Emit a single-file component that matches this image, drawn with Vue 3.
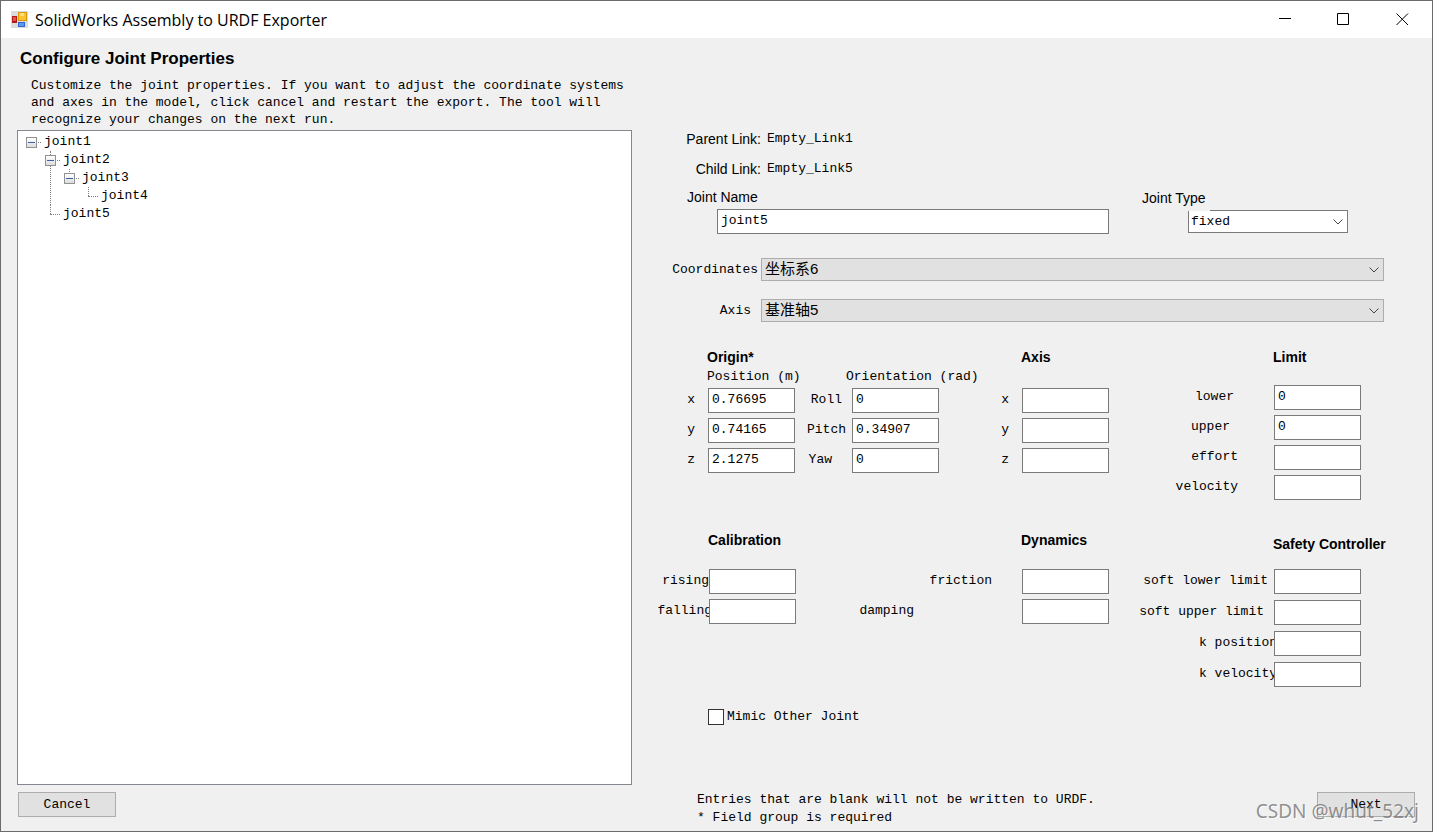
<script setup>
import { reactive, ref } from 'vue'

const open = reactive({ joint1: true, joint2: true, joint3: true })
const jointName = ref('joint5')
const mimic = ref(false)

const position = reactive([
  { id: 'pos-x', label: 'x', value: '0.76695' },
  { id: 'pos-y', label: 'y', value: '0.74165' },
  { id: 'pos-z', label: 'z', value: '2.1275' },
])
const orientation = reactive([
  { id: 'roll', label: 'Roll', value: '0', gap: 'gap-m' },
  { id: 'pitch', label: 'Pitch', value: '0.34907', gap: 'gap-s' },
  { id: 'yaw', label: 'Yaw', value: '0', gap: 'gap-yaw' },
])
const axis = reactive([
  { id: 'axis-x', label: 'x', value: '' },
  { id: 'axis-y', label: 'y', value: '' },
  { id: 'axis-z', label: 'z', value: '' },
])
const limit = reactive([
  { id: 'lower', label: 'lower', value: '0', gap: 'gap-xl' },
  { id: 'upper', label: 'upper', value: '0', gap: 'gap-xxl' },
  { id: 'effort', label: 'effort', value: '', gap: 'gap-l' },
  { id: 'velocity', label: 'velocity', value: '', gap: 'gap-l' },
])
const calibration = reactive([
  { id: 'rising', label: 'rising', value: '', gap: '' },
  { id: 'falling', label: 'falling', value: '', gap: 'tuck' },
])
const dynamics = reactive([
  { id: 'friction', label: 'friction', value: '', gap: 'gap-friction' },
  { id: 'damping', label: 'damping', value: '', gap: 'gap-damping' },
])
const safety = reactive([
  { id: 'soft-lower', label: 'soft lower limit', value: '', gap: 'gap-s' },
  { id: 'soft-upper', label: 'soft upper limit', value: '', gap: 'gap-m' },
  { id: 'k-position', label: 'k position', value: '', gap: 'tuck' },
  { id: 'k-velocity', label: 'k velocity', value: '', gap: 'tuck' },
])
</script>

<template>
  <div class="window">
    <header class="titlebar">
      <svg class="app-icon" viewBox="0 0 17 17" aria-hidden="true">
        <rect width="17" height="17" fill="#dcdcdc" />
        <rect x="7" y="1" width="9" height="9" fill="#d9980f" />
        <rect x="8" y="2" width="7" height="7" fill="#f9c52c" />
        <rect x="9" y="2" width="4" height="3" fill="#fde07a" />
        <rect x="1" y="5" width="5" height="7" fill="#b01c14" />
        <rect x="2" y="6" width="3" height="4" fill="#e0524a" />
        <rect x="7" y="11" width="7" height="5" fill="#2f66d0" />
        <rect x="8" y="12" width="5" height="3" fill="#5f97f2" />
      </svg>
      <h1 class="title">SolidWorks Assembly to URDF Exporter</h1>
      <div class="controls">
        <button type="button" aria-label="Minimize">
          <svg viewBox="0 0 13 13"><path d="M1 5.5H13" /></svg>
        </button>
        <button type="button" aria-label="Maximize">
          <svg viewBox="0 0 13 13"><path d="M.5 .5H11.5V11.5H.5Z" /></svg>
        </button>
        <button type="button" aria-label="Close">
          <svg viewBox="0 0 13 13"><path d="M.5 .5L12 12M12 .5L.5 12" /></svg>
        </button>
      </div>
    </header>

    <main class="body">
      <section class="left">
        <h2 class="heading">Configure Joint Properties</h2>
        <p class="intro">
          Customize the joint properties. If you want to adjust the coordinate systems and axes in
          the model, click cancel and restart the export. The tool will recognize your changes on
          the next run.
        </p>
        <div class="tree">
          <ul>
            <li>
              <div class="node">
                <button type="button" class="toggle" aria-label="Toggle joint1" @click="open.joint1 = !open.joint1"></button>
                <span>joint1</span>
              </div>
              <ul v-show="open.joint1">
                <li>
                  <div class="node">
                    <button type="button" class="toggle" aria-label="Toggle joint2" @click="open.joint2 = !open.joint2"></button>
                    <span>joint2</span>
                  </div>
                  <ul v-show="open.joint2">
                    <li>
                      <div class="node">
                        <button type="button" class="toggle" aria-label="Toggle joint3" @click="open.joint3 = !open.joint3"></button>
                        <span>joint3</span>
                      </div>
                      <ul v-show="open.joint3">
                        <li><div class="node"><span>joint4</span></div></li>
                      </ul>
                    </li>
                  </ul>
                </li>
                <li><div class="node"><span>joint5</span></div></li>
              </ul>
            </li>
          </ul>
        </div>
        <button type="button" class="push">Cancel</button>
      </section>

      <section class="right">
        <dl class="links">
          <dt>Parent Link:</dt>
          <dd>Empty_Link1</dd>
          <dt>Child Link:</dt>
          <dd>Empty_Link5</dd>
        </dl>

        <div class="names">
          <div class="name-field">
            <label class="sans" for="joint-name">Joint Name</label>
            <input id="joint-name" v-model="jointName" type="text" />
          </div>
          <div class="type-field">
            <label class="sans" for="joint-type">Joint Type</label>
            <div class="combo">
              <select id="joint-type"><option>fixed</option></select>
              <svg viewBox="0 0 10 6"><path d="M.5 .5L5 5L9.500 .5" /></svg>
            </div>
          </div>
        </div>

        <div class="refs">
          <label for="coordinates" class="gap-xs">Coordinates</label>
          <div class="combo flat">
            <select id="coordinates"><option>坐标系6</option></select>
            <svg viewBox="0 0 10 6"><path d="M.5 .5L5 5L9.500 .5" /></svg>
          </div>
          <label for="axis-ref" class="gap-m">Axis</label>
          <div class="combo flat">
            <select id="axis-ref"><option>基准轴5</option></select>
            <svg viewBox="0 0 10 6"><path d="M.5 .5L5 5L9.500 .5" /></svg>
          </div>
        </div>

        <div class="groups upper">
          <div class="group origin">
            <h3>Origin*</h3>
            <div class="sub"><span>Position (m)</span><span>Orientation (rad)</span></div>
            <div class="pair">
              <div class="rows">
                <div v-for="f in position" :key="f.id" class="field">
                  <label :for="f.id" class="gap-axis">{{ f.label }}</label>
                  <input :id="f.id" v-model="f.value" type="text" />
                </div>
              </div>
              <div class="rows angles">
                <div v-for="f in orientation" :key="f.id" class="field">
                  <label :for="f.id" :class="f.gap">{{ f.label }}</label>
                  <input :id="f.id" v-model="f.value" type="text" />
                </div>
              </div>
            </div>
          </div>
          <div class="group axis">
            <h3>Axis</h3>
            <div class="rows">
              <div v-for="f in axis" :key="f.id" class="field">
                <label :for="f.id" class="gap-axis">{{ f.label }}</label>
                <input :id="f.id" v-model="f.value" type="text" />
              </div>
            </div>
          </div>
          <div class="group limit">
            <h3>Limit</h3>
            <div class="rows">
              <div v-for="f in limit" :key="f.id" class="field">
                <label :for="f.id" :class="f.gap">{{ f.label }}</label>
                <input :id="f.id" v-model="f.value" type="text" />
              </div>
            </div>
          </div>
        </div>

        <div class="groups lower">
          <div class="group">
            <h3>Calibration</h3>
            <div class="rows">
              <div v-for="f in calibration" :key="f.id" class="field">
                <label :for="f.id" :class="f.gap">{{ f.label }}</label>
                <input :id="f.id" v-model="f.value" type="text" />
              </div>
            </div>
          </div>
          <div class="group">
            <h3>Dynamics</h3>
            <div class="rows">
              <div v-for="f in dynamics" :key="f.id" class="field">
                <label :for="f.id" :class="f.gap">{{ f.label }}</label>
                <input :id="f.id" v-model="f.value" type="text" />
              </div>
            </div>
          </div>
          <div class="group safety">
            <h3>Safety Controller</h3>
            <div class="rows">
              <div v-for="f in safety" :key="f.id" class="field">
                <label :for="f.id" :class="f.gap">{{ f.label }}</label>
                <input :id="f.id" v-model="f.value" type="text" />
              </div>
            </div>
          </div>
        </div>

        <label class="mimic"><input v-model="mimic" type="checkbox" />Mimic Other Joint</label>

        <footer class="footer">
          <p class="notes">
            Entries that are blank will not be written to URDF.<br />
            * Field group is required
          </p>
          <div class="next">
            <button type="button" class="push">Next</button>
            <span class="watermark">CSDN @whut_52xj</span>
          </div>
        </footer>
      </section>
    </main>
  </div>
</template>

<style>
body {
  margin: 0;
}
</style>

<style scoped>
.window,
.window * {
  box-sizing: border-box;
}
.window {
  display: flex;
  flex-direction: column;
  min-height: 100vh;
  border: 1px solid #6b6b6b;
  background: #f0f0f0;
  color: #000;
  font: 13px/20px "Liberation Mono", "Noto Sans CJK SC", monospace;
}
h1,
h2,
h3,
p,
dl,
dd,
ul {
  margin: 0;
  padding: 0;
}
button,
input,
select {
  margin: 0;
  border-radius: 0;
  color: inherit;
  font: inherit;
}

.titlebar {
  display: flex;
  align-items: center;
  height: 37px;
  padding-left: 10px;
  background: #fff;
}
.app-icon {
  width: 17px;
  height: 17px;
}
.title {
  flex: 1;
  margin-left: 7px;
  font: 16px/20px "Open Sans", "Noto Sans", sans-serif;
}
.controls {
  display: flex;
  align-self: stretch;
}
.controls button {
  display: flex;
  align-items: center;
  justify-content: center;
  width: 59px;
  padding: 0;
  border: 0;
  background: none;
}
.controls svg {
  width: 13px;
  height: 13px;
  fill: none;
  stroke: #000;
}

.body {
  flex: 1;
  display: grid;
  grid-template-columns: minmax(0, 631fr) minmax(0, 800fr);
}

.left {
  display: flex;
  flex-direction: column;
  padding: 11px 0 14px 16px;
}
.heading {
  padding-left: 3px;
  font: bold 17px/20px "Liberation Sans", sans-serif;
}
.intro {
  margin: 8px 0 2px;
  padding-left: 14px;
  line-height: 17px;
}
.tree {
  flex: 1;
  padding: 2px 8px;
  border: 1px solid #828790;
  background: #fff;
}
.tree ul {
  list-style: none;
}
.tree ul ul {
  padding-left: 19px;
}
.tree li {
  position: relative;
}
.tree ul ul > li::before {
  content: "";
  position: absolute;
  top: 0;
  bottom: 0;
  left: 5px;
  border-left: 1px dotted #808080;
}
.tree ul ul > li:last-child::before {
  bottom: auto;
  height: 9px;
}
.node {
  position: relative;
  display: flex;
  align-items: center;
  height: 18px;
}
.node::before {
  content: "";
  position: absolute;
  top: 9px;
  left: 5px;
  width: 10px;
  border-top: 1px dotted #808080;
}
.node span {
  margin-left: 18px;
}
.toggle {
  position: relative;
  width: 11px;
  height: 11px;
  padding: 0;
  border: 1px solid #919191;
  background: linear-gradient(#fff, #dcdcdc);
}
.toggle::before {
  content: "";
  position: absolute;
  top: 4px;
  left: 1px;
  width: 7px;
  height: 1px;
  background: #3c5fa8;
}
.toggle + span {
  margin-left: 7px;
}
.push {
  width: 98px;
  height: 25px;
  padding: 0;
  border: 1px solid #adadad;
  background: #e1e1e1;
}
.left .push {
  margin: 7px 0 0 1px;
}

.right {
  display: flex;
  flex-direction: column;
  padding: 86px 0 4px;
}
input[type="text"] {
  height: 25px;
  padding: 0 3px 2px;
  border: 1px solid #7a7a7a;
  background: #fff;
  outline: none;
}
.sans,
.links dt {
  font: 14px/20px "Liberation Sans", sans-serif;
}
.links {
  display: grid;
  grid-template-columns: 129px 1fr;
  grid-auto-rows: 30px;
  column-gap: 6px;
  align-items: center;
}
.links dt {
  text-align: right;
}

.names {
  display: flex;
  align-items: center;
  margin-top: 3px;
  padding: 0 84px 0 55px;
}
.names label {
  display: block;
}
.name-field {
  flex: 1;
}
.name-field label {
  margin-bottom: 2px;
}
.name-field input {
  display: block;
  width: calc(100% - 30px);
  margin-left: 30px;
}
.type-field {
  width: 206px;
  margin-left: 33px;
}
.type-field label {
  position: relative;
  z-index: 1;
  width: 68px;
  margin-bottom: -1px;
  padding-bottom: 3px;
  background: #f0f0f0;
}
.type-field .combo {
  margin-left: 46px;
}
.combo {
  position: relative;
}
.combo select {
  display: block;
  width: 100%;
  height: 23px;
  padding: 0 24px 0 2px;
  border: 1px solid #7a7a7a;
  background: #fff;
  appearance: none;
}
.combo.flat select {
  padding: 0 24px 2px 3px;
  border-color: #adadad;
  background: #e1e1e1;
  font: 15px/20px "Liberation Sans", "Noto Sans CJK SC", sans-serif;
}
.combo svg {
  position: absolute;
  top: 9px;
  right: 5px;
  width: 10px;
  height: 6px;
  fill: none;
  stroke: #444;
  pointer-events: none;
}
.refs {
  display: grid;
  grid-template-columns: 129px minmax(0, 1fr);
  row-gap: 18px;
  align-items: center;
  margin-top: 24px;
  padding-right: 48px;
}
.refs label {
  text-align: right;
}

.groups {
  display: grid;
  padding-right: 71px;
}
.groups.upper {
  grid-template-columns: 307fr 170fr 252fr;
  min-height: 153px;
  margin-top: 25px;
}
.groups.lower {
  grid-template-columns: 164fr 313fr 252fr;
  margin-top: 30px;
}
h3 {
  width: 88px;
  margin-left: auto;
  font: bold 14px/20px "Liberation Sans", sans-serif;
  white-space: nowrap;
}
.rows {
  display: grid;
  gap: 5px;
}
.field {
  display: flex;
  align-items: center;
}
.field label {
  flex: 1;
  padding-bottom: 2px;
  text-align: right;
  white-space: nowrap;
}
.field input {
  position: relative;
  width: 87px;
}
.group.origin h3 {
  width: 232px;
}
.sub {
  display: flex;
  justify-content: flex-end;
  margin: 1px 0 2px;
  line-height: 18px;
  white-space: nowrap;
}
.sub span {
  width: 93px;
}
.sub span:first-child {
  width: 139px;
}
.pair {
  display: flex;
}
.pair .rows {
  flex: 1;
}
.pair .angles {
  flex: none;
  width: 144px;
}
.axis .rows {
  margin-top: 21px;
}
.limit .rows {
  margin-top: 18px;
}
.lower .rows {
  margin-top: 19px;
}
.lower .safety {
  padding-top: 4px;
}
.lower .safety .rows {
  gap: 6px;
  margin-top: 15px;
}

.gap-xs {
  padding-right: 3px;
}
.gap-s {
  padding-right: 6px;
}
.gap-m {
  padding-right: 10px;
}
.gap-axis {
  padding-right: 13px;
}
.gap-yaw {
  padding-right: 20px;
}
.gap-l {
  padding-right: 36px;
}
.gap-xl {
  padding-right: 40px;
}
.gap-xxl {
  padding-right: 44px;
}
.gap-friction {
  padding-right: 30px;
}
.gap-damping {
  padding-right: 108px;
}
.tuck {
  margin-right: -3px;
}

.mimic {
  display: flex;
  align-items: center;
  gap: 3px;
  margin: 20px 0 0 76px;
}
.mimic input {
  width: 16px;
  height: 16px;
  border: 1px solid #333;
  background: #fff;
  appearance: none;
}
.mimic input:checked {
  box-shadow: inset 0 0 0 3px #fff;
  background: #333;
}

.footer {
  display: flex;
  align-items: flex-start;
  justify-content: space-between;
  margin-top: auto;
  padding: 0 17px 0 65px;
}
.notes {
  line-height: 18px;
}
.next {
  position: relative;
  margin-top: 1px;
}
.next .push {
  display: block;
}
.watermark {
  position: absolute;
  top: 7px;
  right: -4px;
  color: rgba(110, 110, 110, 0.75);
  font: 19px/24px "Noto Sans", sans-serif;
  text-shadow: 1px 1px 0 rgba(255, 255, 255, 0.7);
  white-space: nowrap;
  pointer-events: none;
}
</style>
